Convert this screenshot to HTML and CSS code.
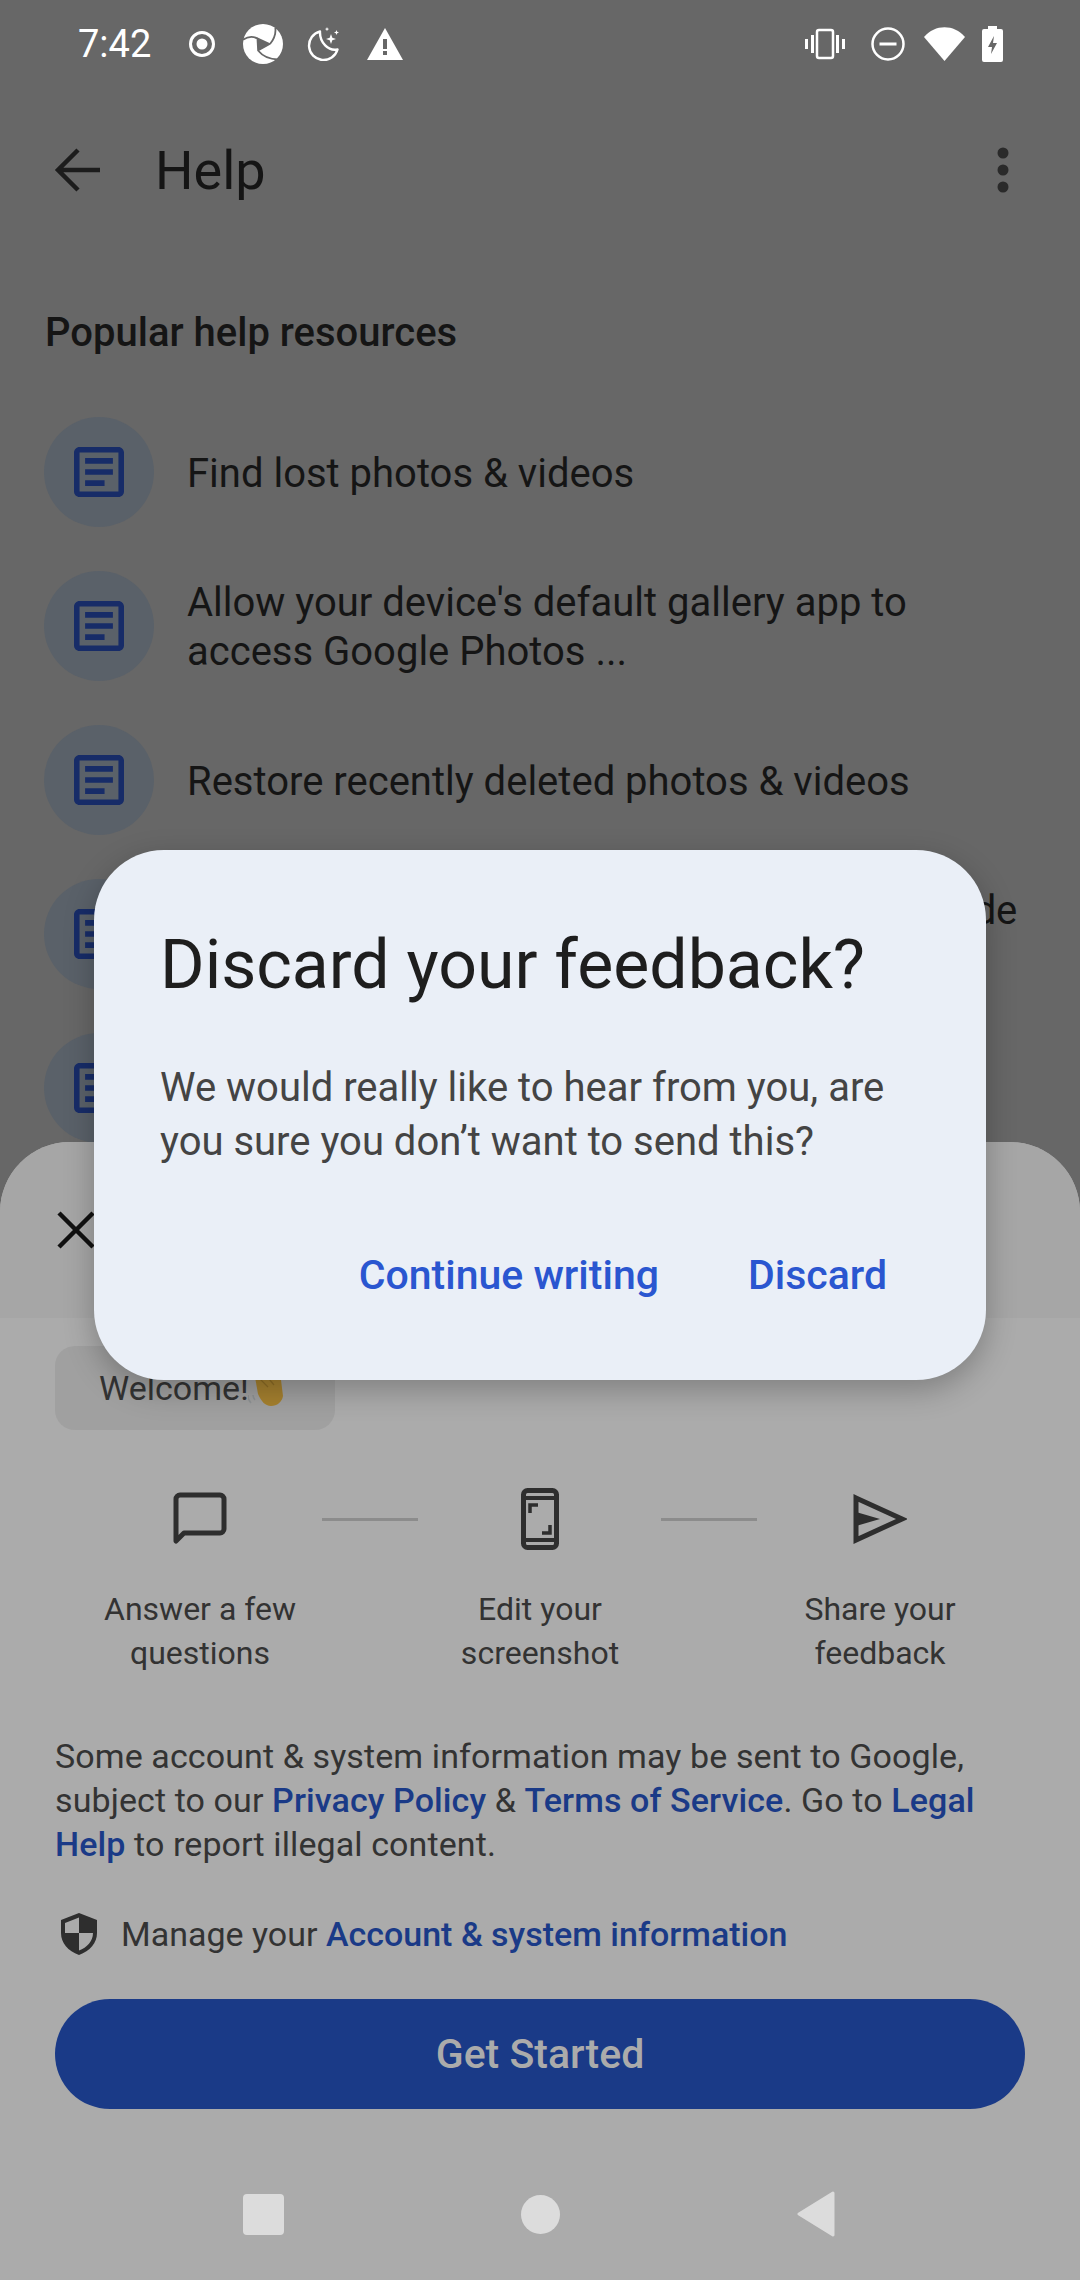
FILE: index.html
```html
<!DOCTYPE html>
<html>
  <head>
    <title>Help</title>
    <link rel="stylesheet" href="styles.css">
  </head>
  <body>
    <div class="screen">

      <div class="statusbar">
        <span class="clock">7:42</span>
        <svg class="st-record" viewBox="0 0 28 28"><circle cx="14" cy="14" r="11.500" fill="none" stroke="#fff" stroke-width="3"/><circle cx="14" cy="14" r="5.500" fill="#fff"/></svg>
        <svg class="st-logo" viewBox="0 0 40 40">
          <circle cx="20" cy="20" r="20" fill="#fff"/>
          <path d="M14.300 14.300L26.700 20 15 26.700z" fill="#676767" stroke="#676767" stroke-width="1.500" stroke-linejoin="round"/>
          <path d="M32.300 3.500Q33.500 12 27 20M0 15.700Q7 11 14.300 14.300M15.500 27Q22 35 35 35.500" fill="none" stroke="#676767" stroke-width="1.800"/>
        </svg>
        <svg class="st-moon" viewBox="0 0 32 34">
          <path d="M13 4.500a14.500 14.500 0 1 0 17.500 18c-9 2-18-7-17.500-18z" fill="none" stroke="#fff" stroke-width="2.400" stroke-linejoin="round"/>
          <path d="M24 7l1.300 3.700 3.700 1.300-3.700 1.300-1.300 3.700-1.300-3.700-3.700-1.300 3.700-1.300zM29.500 3l.7 1.800 1.800.7-1.800.7-.7 1.800-.7-1.800-1.800-.7 1.800-.7zM20 0l.6 1.500 1.500.6-1.500.6-.6 1.500-.6-1.500-1.500-.6 1.500-.6z" fill="#fff"/>
        </svg>
        <svg class="st-warn" viewBox="0 0 36 32"><path fill-rule="evenodd" d="M18 0l18 32H0zM16 11v10h4V11zM16 23v4h4v-4z" fill="#fff"/></svg>
        <span class="statusbar-gap"></span>
        <svg class="st-vibrate" viewBox="0 0 40 32"><rect x="12" y="2" width="16" height="28" rx="2" fill="none" stroke="#fff" stroke-width="2.500"/><path d="M6 7h3v18H6zM31 7h3v18h-3zM0 11h3v10H0zM37 11h3v10h-3z" fill="#fff"/></svg>
        <svg class="st-dnd" viewBox="0 0 34 34"><circle cx="17" cy="17" r="15.500" fill="none" stroke="#fff" stroke-width="2.500"/><rect x="8.500" y="15.500" width="17" height="3" fill="#fff"/></svg>
        <svg class="st-wifi" viewBox="0 0 41 34"><path d="M0 10C11-3 30-3 41 10L20.500 34z" fill="#fff"/></svg>
        <svg class="st-battery" viewBox="0 0 21 36"><path fill-rule="evenodd" d="M6 0h9v3h4a2 2 0 0 1 2 2v29a2 2 0 0 1-2 2H2a2 2 0 0 1-2-2V5a2 2 0 0 1 2-2h4zM12 10l-6 11h4l-1 7 6-11h-4z" fill="#fff"/></svg>
      </div>

      <div class="appbar">
        <svg class="appbar-back" viewBox="0 0 46 44"><path d="M46 22H5M24 2L4 22l20 20" fill="none" stroke="#1c1c1c" stroke-width="4.500"/></svg>
        <span class="appbar-title">Help</span>
        <svg class="appbar-more" viewBox="0 0 12 46"><circle cx="6" cy="6" r="5.500" fill="#2a2a2a"/><circle cx="6" cy="23" r="5.500" fill="#2a2a2a"/><circle cx="6" cy="40" r="5.500" fill="#2a2a2a"/></svg>
      </div>

      <h2 class="section-title">Popular help resources</h2>

      <ul class="help-list">
        <li class="help-item">
          <span class="doc-badge"><svg viewBox="3 3 18 18"><path d="M19 5v14H5V5h14m0-2H5c-1.100 0-2 .9-2 2v14c0 1.100.9 2 2 2h14c1.100 0 2-.9 2-2V5c0-1.100-.9-2-2-2zM14 17H7v-2h7v2zm3-4H7v-2h10v2zm0-4H7V7h10v2z"/></svg></span>
          <span class="help-text">Find lost photos &amp; videos</span>
        </li>
        <li class="help-item">
          <span class="doc-badge"><svg viewBox="3 3 18 18"><path d="M19 5v14H5V5h14m0-2H5c-1.100 0-2 .9-2 2v14c0 1.100.9 2 2 2h14c1.100 0 2-.9 2-2V5c0-1.100-.9-2-2-2zM14 17H7v-2h7v2zm3-4H7v-2h10v2zm0-4H7V7h10v2z"/></svg></span>
          <span class="help-text">Allow your device's default gallery app to<br>access Google Photos ...</span>
        </li>
        <li class="help-item">
          <span class="doc-badge"><svg viewBox="3 3 18 18"><path d="M19 5v14H5V5h14m0-2H5c-1.100 0-2 .9-2 2v14c0 1.100.9 2 2 2h14c1.100 0 2-.9 2-2V5c0-1.100-.9-2-2-2zM14 17H7v-2h7v2zm3-4H7v-2h10v2zm0-4H7V7h10v2z"/></svg></span>
          <span class="help-text">Restore recently deleted photos &amp; videos</span>
        </li>
        <li class="help-item">
          <span class="doc-badge"><svg viewBox="3 3 18 18"><path d="M19 5v14H5V5h14m0-2H5c-1.100 0-2 .9-2 2v14c0 1.100.9 2 2 2h14c1.100 0 2-.9 2-2V5c0-1.100-.9-2-2-2zM14 17H7v-2h7v2zm3-4H7v-2h10v2zm0-4H7V7h10v2z"/></svg></span>
          <span class="help-text help-text-cut">Back up photos &amp; videos in Storage saver mode</span>
        </li>
        <li class="help-item">
          <span class="doc-badge"><svg viewBox="3 3 18 18"><path d="M19 5v14H5V5h14m0-2H5c-1.100 0-2 .9-2 2v14c0 1.100.9 2 2 2h14c1.100 0 2-.9 2-2V5c0-1.100-.9-2-2-2zM14 17H7v-2h7v2zm3-4H7v-2h10v2zm0-4H7V7h10v2z"/></svg></span>
        </li>
      </ul>

      <!-- feedback sheet, sits over the help list -->
      <div class="sheet">
        <div class="sheet-head">
          <svg class="sheet-close" viewBox="0 0 38 38"><path d="M2 2l34 34M36 2L2 36" fill="none" stroke="#111" stroke-width="4.500"/></svg>
        </div>
        <div class="sheet-body">
          <div class="welcome-chip">
            <span>Welcome!</span>
            <svg class="wave" viewBox="0 0 40 45">
              <path d="M7 34a8 8 0 0 1-2-5M3 37a11 11 0 0 1-3-8" fill="none" stroke="#8e9294" stroke-width="1.500"/>
              <path d="M5 0L16 0 27 0 33 14 35 30C34 36 29 40 23 40 17 40 13 35 10 28z" fill="#a5802f"/>
              <path d="M11 12l9 9M17 8l9 11" fill="none" stroke="#8d6c24" stroke-width="1.200"/>
            </svg>
          </div>

          <div class="steps-icons">
            <div class="step-icon">
              <svg class="icon-chat" viewBox="0 0 56 56"><path d="M4 50V8a4 4 0 0 1 4-4h40a4 4 0 0 1 4 4v30a4 4 0 0 1-4 4H12z" fill="none" stroke="#2e2e2e" stroke-width="5" stroke-linejoin="round"/></svg>
            </div>
            <span class="step-line"></span>
            <div class="step-icon">
              <svg class="icon-phone" viewBox="0 0 38 62"><rect x="2.500" y="2.500" width="33" height="57" rx="4" fill="none" stroke="#2e2e2e" stroke-width="5"/><path d="M3 10h32M3 52h32" stroke="#2e2e2e" stroke-width="4" fill="none"/><path d="M9 25v-8h8M29 37v8h-8" fill="none" stroke="#2e2e2e" stroke-width="3.500"/></svg>
            </div>
            <span class="step-line"></span>
            <div class="step-icon">
              <svg class="icon-send" viewBox="0 0 54 50"><path d="M3 4l46 21L3 46z" fill="none" stroke="#2e2e2e" stroke-width="5"/><path d="M3 18l24 7-24 7z" fill="#2e2e2e"/></svg>
            </div>
          </div>

          <div class="steps-labels">
            <span>Answer a few<br>questions</span>
            <span>Edit your<br>screenshot</span>
            <span>Share your<br>feedback</span>
          </div>

          <p class="legal">Some account &amp; system information may be sent to Google, subject to our <a>Privacy Policy</a> &amp; <a>Terms of Service</a>. Go to <a>Legal Help</a> to report illegal content.</p>

          <div class="manage">
            <svg class="icon-shield" viewBox="0 0 36 42"><path fill-rule="evenodd" d="M18 0l18 7v13c0 10-7 18-18 22C7 38 0 30 0 20V7zM18 4.500L4 10v10h14zM18 20v17.500c8-3 14-9.500 14-17.500z" fill="#2e2e2e"/></svg>
            <span>Manage your <a>Account &amp; system information</a></span>
          </div>

          <div class="get-started">Get Started</div>
        </div>

        <div class="navbar">
          <span class="nav-square"></span>
          <span class="nav-circle"></span>
          <svg class="nav-back" viewBox="0 0 39 46"><path d="M37 2L3 23l34 21z" fill="#dcdcdc" stroke="#dcdcdc" stroke-width="3" stroke-linejoin="round"/></svg>
        </div>
      </div>

      <div class="dialog">
        <div class="dialog-title">Discard your feedback?</div>
        <div class="dialog-text">We would really like to hear from you, are<br>you sure you don’t want to send this?</div>
        <div class="dialog-actions">
          <a>Continue writing</a>
          <a>Discard</a>
        </div>
      </div>

    </div>
  </body>
</html>
```

FILE: styles.css
```css
/* Primary layout components
------------------------------- */

body {
  margin: 0;
  background-color: #676767;
  font-family: Roboto, sans-serif;
  color: #151515;
}

.screen {
  position: relative;
  width: 1080px;
  height: 2280px;
  overflow: hidden;
}

/* status bar
------------------------------- */

.statusbar {
  display: flex;
  align-items: center;
  height: 88px;
  padding-left: 78px;
  padding-right: 77px;
}

.clock {
  width: 110px;
  color: #fff;
  font-size: 38px;
}

.statusbar svg {
  flex: none;
}

.statusbar-gap {
  flex: 1;
}

.st-record {
  width: 28px;
  height: 28px;
}

.st-logo {
  width: 40px;
  height: 40px;
  margin-left: 27px;
}

.st-moon {
  width: 32px;
  height: 34px;
  margin-left: 24px;
}

.st-warn {
  width: 36px;
  height: 32px;
  margin-left: 28px;
}

.st-vibrate {
  width: 40px;
  height: 32px;
}

.st-dnd {
  width: 34px;
  height: 34px;
  margin-left: 26px;
}

.st-wifi {
  width: 41px;
  height: 34px;
  margin-left: 19px;
}

.st-battery {
  width: 21px;
  height: 36px;
  margin-left: 17px;
}

/* app bar
------------------------------- */

.appbar {
  display: flex;
  align-items: center;
  height: 164px;
  padding-left: 54px;
  padding-right: 71px;
}

.appbar-back {
  width: 46px;
  height: 44px;
}

.appbar-title {
  flex: 1;
  margin-left: 55px;
  font-size: 54px;
}

.appbar-more {
  width: 12px;
  height: 46px;
}

/* help list
------------------------------- */

.section-title {
  margin: 54px 0 0 45px;
  font-size: 40px;
  font-weight: 500;
  line-height: 54px;
}

.help-list {
  list-style: none;
  margin: 57px 0 0 44px;
  padding: 0;
}

.help-item {
  display: flex;
  align-items: center;
  height: 110px;
  margin-bottom: 44px;
}

.doc-badge {
  display: flex;
  flex: none;
  align-items: center;
  justify-content: center;
  width: 110px;
  height: 110px;
  border-radius: 50%;
  background-color: #5a6169;
}

.doc-badge svg {
  width: 50px;
  height: 50px;
  fill: #172c68;
}

.help-text {
  margin-left: 33px;
  padding-top: 2px;
  font-size: 40px;
  line-height: 49px;
  white-space: nowrap;
}

/* first line of a two line row, the rest is under the dialog */
.help-text-cut {
  padding-bottom: 49px;
  letter-spacing: -0.3px;
}

/* feedback sheet
------------------------------- */

.sheet {
  position: absolute;
  left: 0;
  right: 0;
  top: 1142px;
  bottom: 0;
  display: flex;
  flex-direction: column;
  border-radius: 70px 70px 0 0;
  background-color: #ababab;
  overflow: hidden;
}

.sheet-head {
  display: flex;
  align-items: center;
  height: 176px;
  padding-left: 57px;
  background-color: #a6a6a6;
}

.sheet-close {
  width: 38px;
  height: 38px;
}

.sheet-body {
  padding: 28px 55px 0;
}

.welcome-chip {
  display: flex;
  align-items: center;
  width: 280px;
  height: 84px;
  box-sizing: border-box;
  padding-left: 44px;
  border-radius: 20px;
  background-color: #a0a0a0;
  color: #333;
  font-size: 34px;
}

.wave {
  flex: none;
  width: 40px;
  height: 45px;
  margin-left: -1px;
}

.steps-icons {
  display: grid;
  grid-template-columns: 244px 96px 243px 96px 246px;
  align-items: center;
  height: 90px;
  margin: 44px 0 0 23px;
}

.step-icon {
  display: flex;
  justify-content: center;
}

.step-line {
  height: 3px;
  background-color: #8c8c8c;
}

.icon-chat {
  width: 56px;
  height: 56px;
}

.icon-phone {
  width: 38px;
  height: 62px;
}

.icon-send {
  width: 54px;
  height: 50px;
}

.steps-labels {
  display: grid;
  grid-template-columns: repeat(3, 340px);
  margin: 23px 0 0 -25px;
  color: #333;
  font-size: 32px;
  line-height: 44px;
  text-align: center;
}

.legal {
  margin: 59px 0 0;
  color: #333;
  font-size: 34px;
  line-height: 44px;
  letter-spacing: 0.1px;
}

a {
  color: #1a3a87;
  font-weight: 500;
}

.manage {
  display: flex;
  align-items: center;
  height: 44px;
  margin-top: 46px;
  color: #333;
  font-size: 34px;
}

.icon-shield {
  width: 36px;
  height: 42px;
  margin: 0 24px 0 6px;
}

.get-started {
  display: flex;
  align-items: center;
  justify-content: center;
  height: 110px;
  margin-top: 43px;
  border-radius: 55px;
  background-color: #1a3a87;
  color: #ababab;
  font-size: 41px;
  font-weight: 500;
}

.navbar {
  display: flex;
  align-items: center;
  height: 50px;
  margin-top: 80px;
  padding-left: 243px;
}

.nav-square {
  width: 41px;
  height: 41px;
  border-radius: 4px;
  background-color: #dcdcdc;
}

.nav-circle {
  width: 39px;
  height: 39px;
  margin-left: 237px;
  border-radius: 50%;
  background-color: #dcdcdc;
}

.nav-back {
  width: 39px;
  height: 46px;
  margin-left: 236px;
}

/* dialog
------------------------------- */

.dialog {
  position: absolute;
  left: 94px;
  top: 850px;
  width: 892px;
  height: 530px;
  box-sizing: border-box;
  padding: 65px 99px 0 66px;
  border-radius: 70px;
  background-color: #eaeff7;
  box-shadow: 0 10px 30px rgba(0, 0, 0, 0.25);
  white-space: nowrap;
}

.dialog-title {
  color: #1e1e1e;
  font-size: 68px;
  line-height: 100px;
}

.dialog-text {
  margin-top: 46px;
  color: #444;
  font-size: 40px;
  line-height: 54px;
}

.dialog-actions {
  display: flex;
  justify-content: flex-end;
  gap: 89px;
  margin-top: 79px;
  font-size: 41px;
  line-height: 54px;
}

.dialog-actions a {
  color: #2a56d0;
}
```
